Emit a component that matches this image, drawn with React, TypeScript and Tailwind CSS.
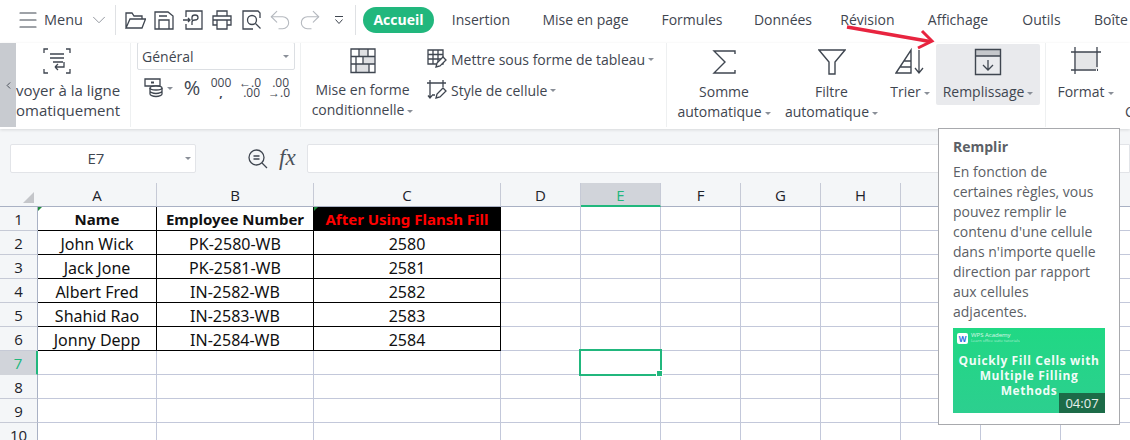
import type { ReactNode } from "react";
import { ChevronDown, ChevronLeft, Menu as MenuIcon, Undo2, Redo2 } from "lucide-react";

const uiFont = "font-['Open_Sans','Noto_Sans',sans-serif]";
const cellFont = "font-['Noto_Sans','Open_Sans',sans-serif]";

const tabs = [
  { label: "Insertion", w: "w-[94px]" },
  { label: "Mise en page", w: "w-[115px]" },
  { label: "Formules", w: "w-[98px]" },
  { label: "Données", w: "w-[84px]" },
  { label: "Révision", w: "w-[85px]" },
  { label: "Affichage", w: "w-[96px]" },
  { label: "Outils", w: "w-[71px]" },
  { label: "Boîte", w: "w-[68px]" },
];

const columns = ["A", "B", "C", "D", "E", "F", "G", "H", "", " ", "  "];

const tableRows = [
  ["John Wick", "PK-2580-WB", "2580"],
  ["Jack Jone", "PK-2581-WB", "2581"],
  ["Albert Fred", "IN-2582-WB", "2582"],
  ["Shahid Rao", "IN-2583-WB", "2583"],
  ["Jonny Depp", "IN-2584-WB", "2584"],
];

function Svg({ size = 24, children, className = "" }: { size?: number; children: ReactNode; className?: string }) {
  return (
    <svg
      width={size}
      height={size}
      viewBox={`0 0 ${size} ${size}`}
      fill="none"
      stroke="#3f4650"
      strokeWidth="1.3"
      className={`shrink-0 ${className}`}
    >
      {children}
    </svg>
  );
}

function Caret({ className = "" }: { className?: string }) {
  return <span className={`inline-block ml-[3px] align-middle w-0 h-0 border-x-[3px] border-x-transparent border-t-[3px] border-t-[#8a8f98] ${className}`} />;
}

function BigButton({ icon, lines, active }: { icon: ReactNode; lines: ReactNode[]; active?: boolean }) {
  return (
    <div className={`flex flex-col items-center h-[61px] mt-px pt-[4px] rounded-[2px] ${active ? "bg-[#e9eaed]" : ""}`}>
      <div className="h-[28px] flex items-center justify-center">{icon}</div>
      {lines.map((l, i) => (
        <div key={i} className={`h-[20px] leading-[20px] text-[14px] whitespace-nowrap text-[#3f4650] ${i === 0 ? "mt-[6px]" : ""}`}>
          {l}
        </div>
      ))}
    </div>
  );
}

function TopBar() {
  return (
    <div className={`h-[43px] bg-white flex items-center pb-[4px] overflow-hidden text-[14px] text-[#3f4650] ${uiFont}`}>
      <MenuIcon size={24} strokeWidth={1.1} className="ml-[16px] shrink-0 text-[#3f4650]" />
      <span className="ml-[4px] text-[14.5px] shrink-0">Menu</span>
      <ChevronDown size={22} strokeWidth={1} className="ml-[5px] shrink-0 text-[#8a8f98]" />
      <div className="ml-[5px] w-px h-[30px] bg-[#dfe1e4] shrink-0" />
      <Svg size={22} className="ml-[8px]">
        <path d="M2 19V4h6l2 3h8v3M2 19h16l3.500-9H6L2 19Z" />
      </Svg>
      <Svg size={20} className="ml-[8px]">
        <path d="M1 2h13l5 4v13H1V2Z" />
        <path d="M5 19v-9h10v9M5 6h8" />
      </Svg>
      <Svg size={20} className="ml-[9px]">
        <path d="M3 7V1h16v18H3v-5" />
        <path d="M0 10h7M5 8l2 2-2 2" />
        <path d="M9 15v-3c0-1 1-2 3-2s3-1 3-2.500S14 5 12 5s-3 1-3 2.500V10" />
      </Svg>
      <Svg size={20} className="ml-[9px]">
        <path d="M5 6V1h10v5M5 15H1V6h18v9h-4" />
        <path d="M1 10h4M15 10h4M5 10h10v9H5v-9Z" />
      </Svg>
      <Svg size={20} className="ml-[10px]">
        <path d="M18 8V3l-2-2H1v18h10" />
        <circle cx="10" cy="10" r="4.500" />
        <path d="m13.500 13.500 5 5" />
      </Svg>
      <Undo2 size={26} strokeWidth={1} className="ml-[5px] shrink-0 text-[#b5b9bf]" />
      <Redo2 size={26} strokeWidth={1} className="ml-[4px] shrink-0 text-[#b5b9bf]" />
      <svg width="10" height="10" viewBox="0 0 10 10" fill="none" stroke="#3f4650" className="ml-[11px] shrink-0">
        <path d="M1 1.500h8M1.500 4.500 5 8.500l3.500-4" />
      </svg>
      <div className="ml-[11px] w-px h-[30px] bg-[#dfe1e4] shrink-0" />
      <div className="ml-[7px] w-[71px] h-[26px] shrink-0 rounded-full bg-[#21b77d] flex items-center justify-center text-white font-bold text-[14px]">
        Accueil
      </div>
      {tabs.map((t) => (
        <div key={t.label} className={`${t.w} shrink-0 whitespace-nowrap text-center`}>
          {t.label}
        </div>
      ))}
    </div>
  );
}

function Ribbon() {
  return (
    <div className={`h-[86px] bg-white flex relative shadow-[0_1px_3px_rgba(0,0,0,0.12)] overflow-hidden ${uiFont} text-[#3f4650]`}>
      <div className="w-[16px] h-[84px] bg-[#c8cbd0] flex items-center justify-center shrink-0">
        <ChevronLeft size={11} strokeWidth={2} className="text-[#3f4650]" />
      </div>

      <div className="w-[115px] h-[84px] border-r border-[#eef0f1] shrink-0 pt-[4px] overflow-hidden">
        <div className="h-[28px] flex items-center ml-[26px]">
          <Svg size={30}>
            <path d="M2 7V3h4M24 3h4v4M2 23v4h4M24 27h4v-4" />
            <path d="M8 8h14M8 12h14M11 16h10M22 16v5H13M13 21l3-3M13 21l3 3" />
          </Svg>
        </div>
        <div className="text-[15px] leading-[20px] mt-[5px] whitespace-nowrap">voyer à la ligne</div>
        <div className="text-[15px] leading-[20px] whitespace-nowrap">omatiquement</div>
      </div>

      <div className="w-[170px] h-[84px] border-r border-[#eef0f1] shrink-0 pl-[6px]">
        <div className="w-[158px] h-[28px] border border-[#dcdfe3] rounded-[2px] flex items-center justify-between px-[4px] text-[14px] -mt-px">
          Général
          <Caret className="mr-[1px]" />
        </div>
        <div className="flex items-center mt-[7px] ml-[7px] h-[22px]">
          <Svg size={20}>
            <path d="M1 1h15v7H1V1Z" />
            <path d="M7 4.500h3" strokeWidth="2" />
            <ellipse cx="12" cy="10" rx="6" ry="2" fill="white" />
            <path d="M6 10v6c0 1 2.500 2.500 6 2.500s6-1.500 6-2.500v-6M6 13c0 1 2.500 2.500 6 2.500s6-1.500 6-2.500" />
          </Svg>
          <Caret className="ml-[3px]" />
          <span className="ml-[10px] text-[20px] leading-none w-[18px] text-center shrink-0">%</span>
          <span className="ml-[9px] text-[12px] leading-[10px] text-center w-[22px] shrink-0 font-medium">
            000
            <br />
            <b>,</b>
          </span>
          <span className="ml-[7px] text-[12px] leading-[10px] text-right w-[21px] shrink-0 font-medium">
            ←.0
            <br />
            .00
          </span>
          <span className="ml-[8px] text-[12px] leading-[10px] text-right w-[21px] shrink-0 font-medium">
            .00
            <br />
            →.0
          </span>
        </div>
      </div>

      <div className="w-[366px] h-[84px] border-r border-[#eef0f1] shrink-0 flex">
        <div className="w-[126px] pl-[4px] pr-[7px] shrink-0">
          <BigButton
            icon={
              <Svg size={26}>
                <path d="M9 1h9v7.500H9zM13 8.500h12V16H13zM6 16h13v8.500H6z" fill="#dfe0e3" stroke="none" />
                <path d="M1 1h24v23.500H1V1Z" />
                <path d="M1 8.500h24M1 16h24M9 1v7.500M18 1v7.500M6 8.500V16M13 8.500V16M6 16v8.500M19 16v8.500" />
              </Svg>
            }
            lines={["Mise en forme", <>conditionnelle<Caret /></>]}
          />
        </div>
        <div className="text-[14px] pt-[4px]">
          <div className="flex items-center h-[24px] whitespace-nowrap">
            <Svg size={20}>
              <path d="M1 1h15v14H1V1ZM1 5.500h15M1 10h15M6 1v14M11 1v14" />
              <path d="m9 18 1-4 6-6 3 3-6 6-4 1Z" fill="white" />
            </Svg>
            <span className="ml-[4px]">Mettre sous forme de tableau</span>
            <Caret />
          </div>
          <div className="flex items-center h-[24px] mt-[7px] whitespace-nowrap">
            <Svg size={20}>
              <path d="M0 3h19M3 0v18M1 15.500 3 18l2-2.500M16 0v7M5 15h3" />
              <path d="m9 18 1-4 6-6 3 3-6 6-4 1Z" fill="white" />
            </Svg>
            <span className="ml-[4px]">Style de cellule</span>
            <Caret />
          </div>
        </div>
      </div>

      <div className="w-[379px] h-[84px] border-r border-[#eef0f1] shrink-0 flex">
        <div className="w-[114px] shrink-0">
          <BigButton
            icon={
              <Svg size={28}>
                <path d="M25 6V3H4l11 11L4 25h21v-3" strokeWidth="1.4" />
              </Svg>
            }
            lines={["Somme", <>automatique<Caret /></>]}
          />
        </div>
        <div className="w-[101px] shrink-0">
          <BigButton
            icon={
              <Svg size={28}>
                <path d="M1 2h26L17 14v12h-6V14L1 2Z" strokeWidth="1.4" />
              </Svg>
            }
            lines={["Filtre", <>automatique<Caret /></>]}
          />
        </div>
        <div className="w-[54px] shrink-0 pl-[2px]">
          <BigButton
            icon={
              <Svg size={30}>
                <path d="M1 26 16 3v23H1ZM9 14h7M5 20h11" strokeWidth="1.4" />
                <path d="M24 3v23M20 21l4 5 4-5" strokeWidth="1.3" />
              </Svg>
            }
            lines={[<>Trier<Caret /></>]}
          />
        </div>
        <div className="w-[104px] shrink-0">
          <BigButton
            active
            icon={
              <Svg size={28}>
                <path d="M2 2h24v6H2z" fill="#c5c7cb" stroke="none" />
                <path d="M1.500 1.500h25v25h-25z" strokeWidth="1.4" />
                <path d="M1.500 8h25M14 12v10M9 17l5 5 5-5" strokeWidth="1.3" />
              </Svg>
            }
            lines={[<>Remplissage<Caret /></>]}
          />
        </div>
      </div>

      <div className="w-[76px] shrink-0 pl-[3px]">
        <BigButton
          icon={
            <Svg size={30}>
              <path d="M3 5h24v17H3z" fill="#e5e6e8" stroke="none" />
              <path d="M0 5h30M0 23h25M4 0v27M26 0v20" />
              <path d="M26 23h1" strokeWidth="2" />
            </Svg>
          }
          lines={[<>Format<Caret /></>]}
        />
      </div>
      <div className="absolute left-[1125px] top-[58px] text-[14px]">C</div>
    </div>
  );
}

function FormulaBar() {
  return (
    <div className={`h-[54px] bg-[#f4f6f8] flex items-start pt-[15px] pl-[10px] ${uiFont}`}>
      <div className="w-[186px] h-[29px] shrink-0 bg-white border border-[#e2e4e8] rounded-[2px] flex items-center text-[15px] text-[#3f4650] relative">
        <span className="w-full text-center pr-[14px]">E7</span>
        <Caret className="absolute right-[4px] top-[12px]" />
      </div>
      <div className="ml-[51px] mt-[4px] shrink-0">
        <Svg size={22}>
          <circle cx="9.500" cy="9.500" r="7.500" />
          <path d="M6.500 8h6M6.500 11h6M15 15l5 5" />
        </Svg>
      </div>
      <span className="ml-[10px] w-[28px] shrink-0 -mt-[1px] font-['Liberation_Serif',serif] italic text-[23px] leading-[30px] text-[#4b515a]">fx</span>
      <div className="flex-1 h-[29px] bg-white border border-[#e2e4e8] rounded-l-[2px]" />
    </div>
  );
}

function Sheet() {
  return (
    <div className={`relative grid grid-cols-[38px_119px_157px_187px_80px_80px_80px_80px_80px_80px_80px_80px] auto-rows-[24px] ${cellFont} text-[16px] text-[#111]`}>
      {/* column headers */}
      <div className="bg-[#f4f6f8] border-b border-[#a9b1c4] flex items-end justify-end pr-[4px] pb-[3px]">
        <div className="w-0 h-0 border-l-[11px] border-l-transparent border-b-[11px] border-b-[#c4c6ca]" />
      </div>
      {columns.map((c, i) => (
        <div
          key={i}
          className={`flex items-center justify-center pt-[2px] border-r border-[#c6cad6] ${uiFont} text-[15px] ${
            c === "E"
              ? "bg-[#d1d4da] text-[#21b77d] border-b-2 border-b-[#21b77d]"
              : "bg-[#f4f6f8] border-b border-b-[#a9b1c4] text-[#1d222a]"
          }`}
        >
          {c}
        </div>
      ))}
      {/* rows */}
      {Array.from({ length: 10 }, (_, r) => {
        const n = r + 1;
        const data = n === 1 ? ["Name", "Employee Number", "After Using Flansh Fill"] : tableRows[n - 2];
        return (
          <div key={n} className="contents">
            <div
              className={`flex items-center justify-center pt-[2px] text-[15px] ${uiFont} border-r ${
                n === 7
                  ? "bg-[#d1d4da] text-[#21b77d] border-r-2 border-r-[#21b77d] border-b border-b-[#d1d4da]"
                  : "bg-[#f4f6f8] text-[#1d222a] border-r-[#a9b1c4] border-b border-b-[#c6cad6]"
              }`}
            >
              {n}
            </div>
            {columns.map((c, ci) => {
              if (ci < 3 && data) {
                const header = n === 1;
                return (
                  <div
                    key={ci}
                    className={`relative flex items-center justify-center whitespace-nowrap pt-[2px] border-r border-b border-black ${
                      header ? "font-bold text-[15px]" : ""
                    } ${header && ci === 2 ? "bg-black text-[#ff0000]" : "bg-white"}`}
                  >
                    {data[ci]}
                    {header && ci !== 1 && (
                      <span className="absolute left-0 top-0 w-0 h-0 border-r-[4px] border-r-transparent border-t-[4px] border-t-[#1f8a3c]" />
                    )}
                  </div>
                );
              }
              return <div key={ci} className="bg-white border-r border-b border-[#c3c8da]" />;
            })}
          </div>
        );
      })}
      {/* selected cell E7 */}
      <div className="absolute left-[579px] top-[166px] w-[83px] h-[27px] border-2 border-[#21b77d] pointer-events-none">
        <span className="absolute -right-[3px] -bottom-[3px] w-[5px] h-[5px] bg-[#21b77d] border border-white box-content" />
      </div>
    </div>
  );
}

function Tooltip() {
  return (
    <div className={`absolute left-[938px] top-[128px] w-[182px] h-[297px] bg-white border border-[#a8a9ad] px-[14px] pt-[8px] text-[14px] leading-[20px] text-[#5c5f66] ${uiFont}`}>
      <div className="font-bold text-[14px] leading-[20px] mb-[5px]">Remplir</div>
      <p>
        En fonction de
        <br />
        certaines règles, vous
        <br />
        pouvez remplir le
        <br />
        contenu d'une cellule
        <br />
        dans n'importe quelle
        <br />
        direction par rapport
        <br />
        aux cellules
        <br />
        adjacentes.
      </p>
      <div className="relative mt-[6px] w-[152px] h-[85px] overflow-hidden bg-gradient-to-b from-[#20d884] to-[#2ccf8f]">
        <div className="absolute left-[4px] top-[5px] w-[11px] h-[11px] rounded-[2px] bg-white flex items-center justify-center text-[8px] leading-none font-bold text-[#2f6fe0]">W</div>
        <div className="absolute left-[18px] top-[3px] text-[6px] leading-[8px] text-white/80 whitespace-nowrap">WPS Academy</div>
        <div className="absolute left-[18px] top-[10px] text-[4px] leading-[6px] text-white/60 whitespace-nowrap">Learn office suite tutorials</div>
        <div className="absolute left-0 right-0 top-[25px] text-center text-[12px] leading-[15px] font-bold tracking-[0.6px] text-white/95 whitespace-nowrap">
          Quickly Fill Cells with
          <br />
          Multiple Filling
          <br />
          Methods
        </div>
        <div className="absolute right-0 bottom-0 w-[46px] h-[20px] bg-[#1c6b48] flex items-center justify-center text-[13px] text-white/90">
          04:07
        </div>
      </div>
    </div>
  );
}

export default function App() {
  return (
    <div className="relative w-[1130px] h-[440px] overflow-hidden bg-white">
      <TopBar />
      <Ribbon />
      <FormulaBar />
      <Sheet />
      <Tooltip />
      {/* red annotation arrow */}
      <svg width="100" height="40" viewBox="0 0 100 40" fill="none" className="absolute left-[845px] top-[20px]">
        <path d="M2 7 L85 21.500" stroke="#e8243f" strokeWidth="3.500" />
        <path d="M77 11 L87 21 L73 28" stroke="#e8243f" strokeWidth="3" />
      </svg>
    </div>
  );
}
